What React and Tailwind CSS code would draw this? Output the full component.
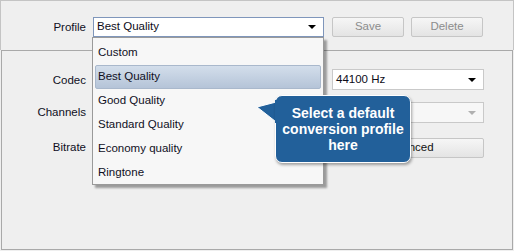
import React from "react";

function Arrow({ color = "#000" }) {
  return (
    <svg width="8" height="4" viewBox="0 0 8 4" className="shrink-0">
      <path d="M0 0 H8 L4 4 Z" fill={color} />
    </svg>
  );
}

function Combo({ text, width, disabled, focused, h = "h-[21px]" }) {
  return (
    <div
      className={`${h} flex items-center justify-between pl-[3px] pr-[7px] border ${
        focused ? "border-[#7f96bb]" : "border-[#c9c9c9]"
      } ${disabled ? "bg-[#f7f7f7]" : "bg-white"}`}
      style={{ width }}
    >
      <span className="text-[#0c0c18]">{text}</span>
      <Arrow color={disabled ? "#b0b0b0" : "#000"} />
    </div>
  );
}

function Button({ children, width, disabled }) {
  return (
    <div
      className={`h-[20px] flex items-center justify-center border border-[#c6c6c6] rounded-[2px] bg-gradient-to-b from-[#f6f6f6] to-[#e4e4e4] ${
        disabled ? "text-[#8c8c8c]" : "text-[#111]"
      }`}
      style={{ width }}
    >
      {children}
    </div>
  );
}

export default function App() {
  const items = ["Custom", "Best Quality", "Good Quality", "Standard Quality", "Economy quality", "Ringtone"];
  return (
    <div
      className="relative w-[514px] h-[251px] bg-[#efefef] text-[11.5px] text-[#10101e] overflow-hidden"
      style={{ fontFamily: '"Liberation Sans", Arial, sans-serif' }}
    >
      {/* top section */}
      <div className="h-[50px] border-t border-l border-r border-[#c4c4c4] pt-[16px] flex items-start">
        <div className="w-[85px] text-right h-[20px] leading-[20px]">Profile</div>
        <div className="ml-[7px]">
          <Combo text="Best Quality" width={231} focused h="h-[20px]" />
        </div>
        <div className="ml-[8px]">
          <Button width={72} disabled>Save</Button>
        </div>
        <div className="ml-[7px]">
          <Button width={72} disabled>Delete</Button>
        </div>
      </div>

      {/* lower group */}
      <div className="h-[200px] mx-[1px] border border-[#a9a9a9] pt-[18px] flex flex-col">
        <div className="flex items-center">
          <div className="w-[84px] text-right pt-[2px]">Codec</div>
          <div className="ml-[7px]"><Combo text="" width={231} /></div>
          <div className="ml-[8px]"><Combo text="44100 Hz" width={152} /></div>
        </div>
        <div className="flex items-center mt-[12px]">
          <div className="w-[84px] text-right pt-[1px]">Channels</div>
          <div className="ml-[7px]"><Combo text="" width={231} /></div>
          <div className="ml-[8px]"><Combo text="" width={152} disabled /></div>
        </div>
        <div className="flex items-center mt-[14px]">
          <div className="w-[84px] text-right">Bitrate</div>
          <div className="ml-[7px]"><Combo text="" width={231} /></div>
          <div className="ml-[8px]"><Button width={152}>Advanced</Button></div>
        </div>
      </div>

      {/* dropdown list */}
      <div className="absolute left-[92px] top-[37px] w-[232px] h-[148px] bg-[#f7f7f7] border border-[#9a9a9a] pt-[3px] shadow-[3px_3px_2px_rgba(0,0,0,0.35)]">
        {items.map((it, i) => (
          <div
            key={it}
            className={`h-[24px] mx-[2px] flex items-center pl-[2px] ${
              i === 1
                ? "bg-gradient-to-b from-[#d3deeb] to-[#b5c4d8] border border-[#a9b8cc] rounded-[2px]"
                : "border border-transparent"
            }`}
          >
            {it}
          </div>
        ))}
      </div>

      {/* callout */}
      <div className="absolute left-[256px] top-[95px] w-[156px] h-[70px]">
        <svg width="24" height="28" viewBox="0 0 24 28" className="absolute left-0 top-[4px]">
          <path d="M1 8 L24 2 L24 26 Z" fill="#22609a" stroke="#ffffff" strokeWidth="1" />
        </svg>
        <div className="absolute left-[19px] top-0 w-[136px] h-[68px] rounded-[7px] bg-[#22609a] border border-white shadow-[1px_2px_3px_rgba(0,0,0,0.35)] flex flex-col items-center justify-center text-white font-bold text-[14px] leading-[16px] text-center">
          <div>Select a default</div>
          <div>conversion profile</div>
          <div>here</div>
        </div>
        <div className="absolute left-[19px] top-[5px] w-[3px] h-[23px] bg-[#22609a]" />
      </div>
    </div>
  );
}
